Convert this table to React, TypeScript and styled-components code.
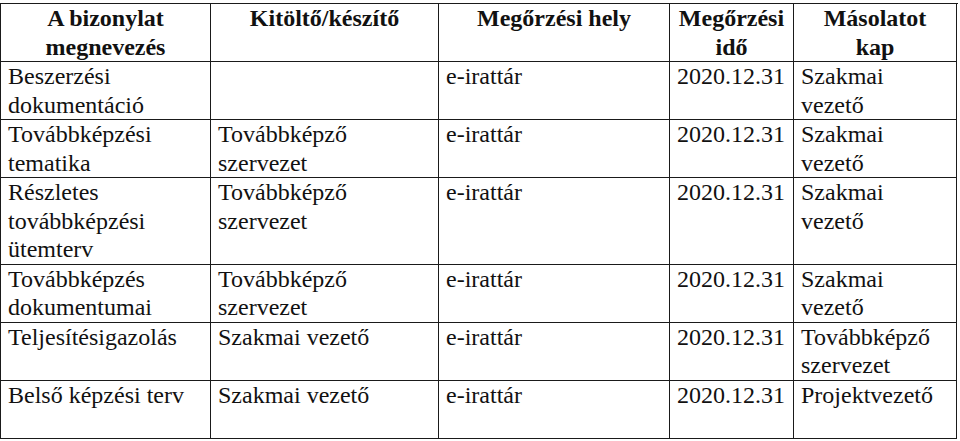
import React from "react";
import styled, { createGlobalStyle } from "styled-components";

const SERIF = `"Liberation Serif", "Times New Roman", Tinos, serif`;

const Global = createGlobalStyle`
  html, body { margin: 0; padding: 0; background: #ffffff; }
`;

const Page = styled.div`
  padding-top: 3px;
`;

const Grid = styled.div<{ $font: string }>`
  width: 957px;
  border-top: 1px solid #1a1a1a;
  border-left: 1px solid #1a1a1a;
  font-family: ${(p) => p.$font};
  font-size: 24px;
  line-height: 28.5px;
  color: #111;
`;

const Row = styled.div`
  display: grid;
  grid-template-columns: 210px 228px 231px 124px 163px;
`;

const Cell = styled.div<{ $font: string }>`
  box-sizing: border-box;
  border-right: 1px solid #1a1a1a;
  border-bottom: 1px solid #1a1a1a;
  min-height: 58px;
  padding: 0 6px 0 7px;
  font-family: ${(p) => p.$font};
  font-weight: normal;
  text-align: left;
`;

const HeadCell = styled.div<{ $font: string; $padX: number }>`
  box-sizing: border-box;
  border-right: 1px solid #1a1a1a;
  border-bottom: 1px solid #1a1a1a;
  min-height: 58px;
  padding: 0 ${(p) => p.$padX}px;
  font-family: ${(p) => p.$font};
  font-weight: bold;
  text-align: center;
`;

const headers: { text: string; padX: number }[] = [
  { text: "A bizonylat megnevezés", padX: 4 },
  { text: "Kitöltő/készítő", padX: 4 },
  { text: "Megőrzési hely", padX: 4 },
  { text: "Megőrzési idő", padX: 4 },
  { text: "Másolatot kap", padX: 12 },
];

const rows: string[][] = [
  ["Beszerzési dokumentáció", "", "e-irattár", "2020.12.31", "Szakmai vezető"],
  ["Továbbképzési tematika", "Továbbképző szervezet", "e-irattár", "2020.12.31", "Szakmai vezető"],
  ["Részletes továbbképzési ütemterv", "Továbbképző szervezet", "e-irattár", "2020.12.31", "Szakmai vezető"],
  ["Továbbképzés dokumentumai", "Továbbképző szervezet", "e-irattár", "2020.12.31", "Szakmai vezető"],
  ["Teljesítésigazolás", "Szakmai vezető", "e-irattár", "2020.12.31", "Továbbképző szervezet"],
  ["Belső képzési terv", "Szakmai vezető", "e-irattár", "2020.12.31", "Projektvezető"],
];

export default function App() {
  return (
    <Page>
      <Global />
      <Grid $font={SERIF}>
        <Row>
          {headers.map((h) => (
            <HeadCell key={h.text} $font={SERIF} $padX={h.padX}>
              {h.text}
            </HeadCell>
          ))}
        </Row>
        {rows.map((r, i) => (
          <Row key={i}>
            {r.map((c, j) => (
              <Cell key={j} $font={SERIF}>
                {c}
              </Cell>
            ))}
          </Row>
        ))}
      </Grid>
    </Page>
  );
}
